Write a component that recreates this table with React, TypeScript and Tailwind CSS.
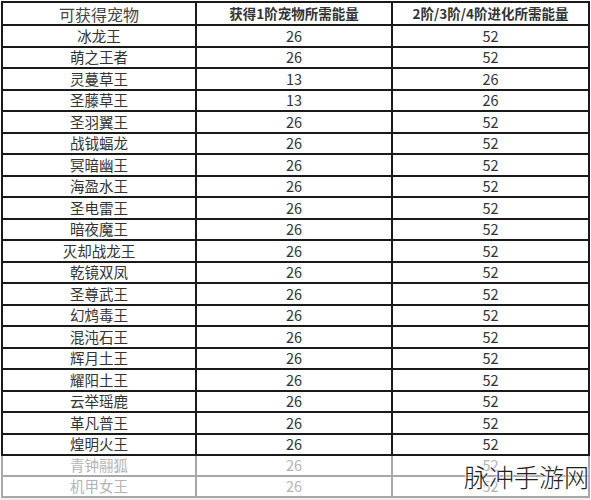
import React from "react";

const pets: [string, number, number][] = [
  ["冰龙王", 26, 52],
  ["萌之王者", 26, 52],
  ["灵蔓草王", 13, 26],
  ["圣藤草王", 13, 26],
  ["圣羽翼王", 26, 52],
  ["战钺蝠龙", 26, 52],
  ["冥暗幽王", 26, 52],
  ["海盈水王", 26, 52],
  ["圣电雷王", 26, 52],
  ["暗夜魔王", 26, 52],
  ["灭却战龙王", 26, 52],
  ["乾镜双凤", 26, 52],
  ["圣尊武王", 26, 52],
  ["幻鸩毒王", 26, 52],
  ["混沌石王", 26, 52],
  ["辉月土王", 26, 52],
  ["耀阳土王", 26, 52],
  ["云举瑶鹿", 26, 52],
  ["革凡普王", 26, 52],
  ["煌明火王", 26, 52],
];

const faded: [string, number, number][] = [
  ["青钟翮狐", 26, 52],
  ["机甲女王", 26, 52],
];

const font = { fontFamily: '"Noto Sans CJK SC", "Noto Sans", sans-serif' };

export default function App() {
  return (
    <div className="relative w-[591px] h-[500px] overflow-hidden bg-[#f0f0f0]" style={font}>
      <div className="bg-white h-[498px] pl-[1px] pt-[1px]">
        <div className="w-[589px] border-l-2 border-t-2 border-[#1a1a1a]">
          {/* header */}
          <div className="grid grid-cols-[194px_196px_197px] h-[23px] border-b-2 border-[#1a1a1a]">
            <div className="flex items-center justify-center border-r-2 border-[#1a1a1a] text-[16px] text-[#444] leading-none">
              可获得宠物
            </div>
            <div className="flex items-center justify-center border-r-2 border-[#1a1a1a] text-[13.5px] font-bold text-[#333] leading-none">
              获得1阶宠物所需能量
            </div>
            <div className="flex items-center justify-center border-r-2 border-[#1a1a1a] text-[13.5px] font-bold text-[#333] leading-none">
              2阶/3阶/4阶进化所需能量
            </div>
          </div>

          {pets.map(([name, a, b]) => (
            <div
              key={name}
              className="grid grid-cols-[194px_196px_197px] h-[21.5px] border-b-2 border-[#1a1a1a] text-[14.5px] text-[#333] leading-none"
            >
              <div className="flex items-center justify-center border-r-2 border-[#1a1a1a]">{name}</div>
              <div className="flex items-center justify-center border-r-2 border-[#1a1a1a]">{a}</div>
              <div className="flex items-center justify-center border-r-2 border-[#1a1a1a]">{b}</div>
            </div>
          ))}
        </div>

        {/* faded rows at the bottom */}
        <div className="w-[589px] border-l-2 border-[#a8a8a8]">
          {faded.map(([name, a, b]) => (
            <div
              key={name}
              className="grid grid-cols-[194px_196px_197px] h-[21px] border-b-2 border-[#a8a8a8] text-[14.5px] text-[#b4b4b4] leading-none"
            >
              <div className="flex items-center justify-center border-r-2 border-[#a8a8a8]">{name}</div>
              <div className="flex items-center justify-center border-r-2 border-[#a8a8a8]">{a}</div>
              <div className="flex items-center justify-center border-r-2 border-[#a8a8a8]">{b}</div>
            </div>
          ))}
        </div>
      </div>

      {/* watermark */}
      <div
        className="absolute left-[464px] top-[464px] text-[25px] font-light leading-none text-[#222] tracking-[0px]"
        style={{ textShadow: "0 0 2px #fff, 0 0 2px #fff, 0 0 3px #fff" }}
      >
        脉冲手游网
      </div>
    </div>
  );
}
